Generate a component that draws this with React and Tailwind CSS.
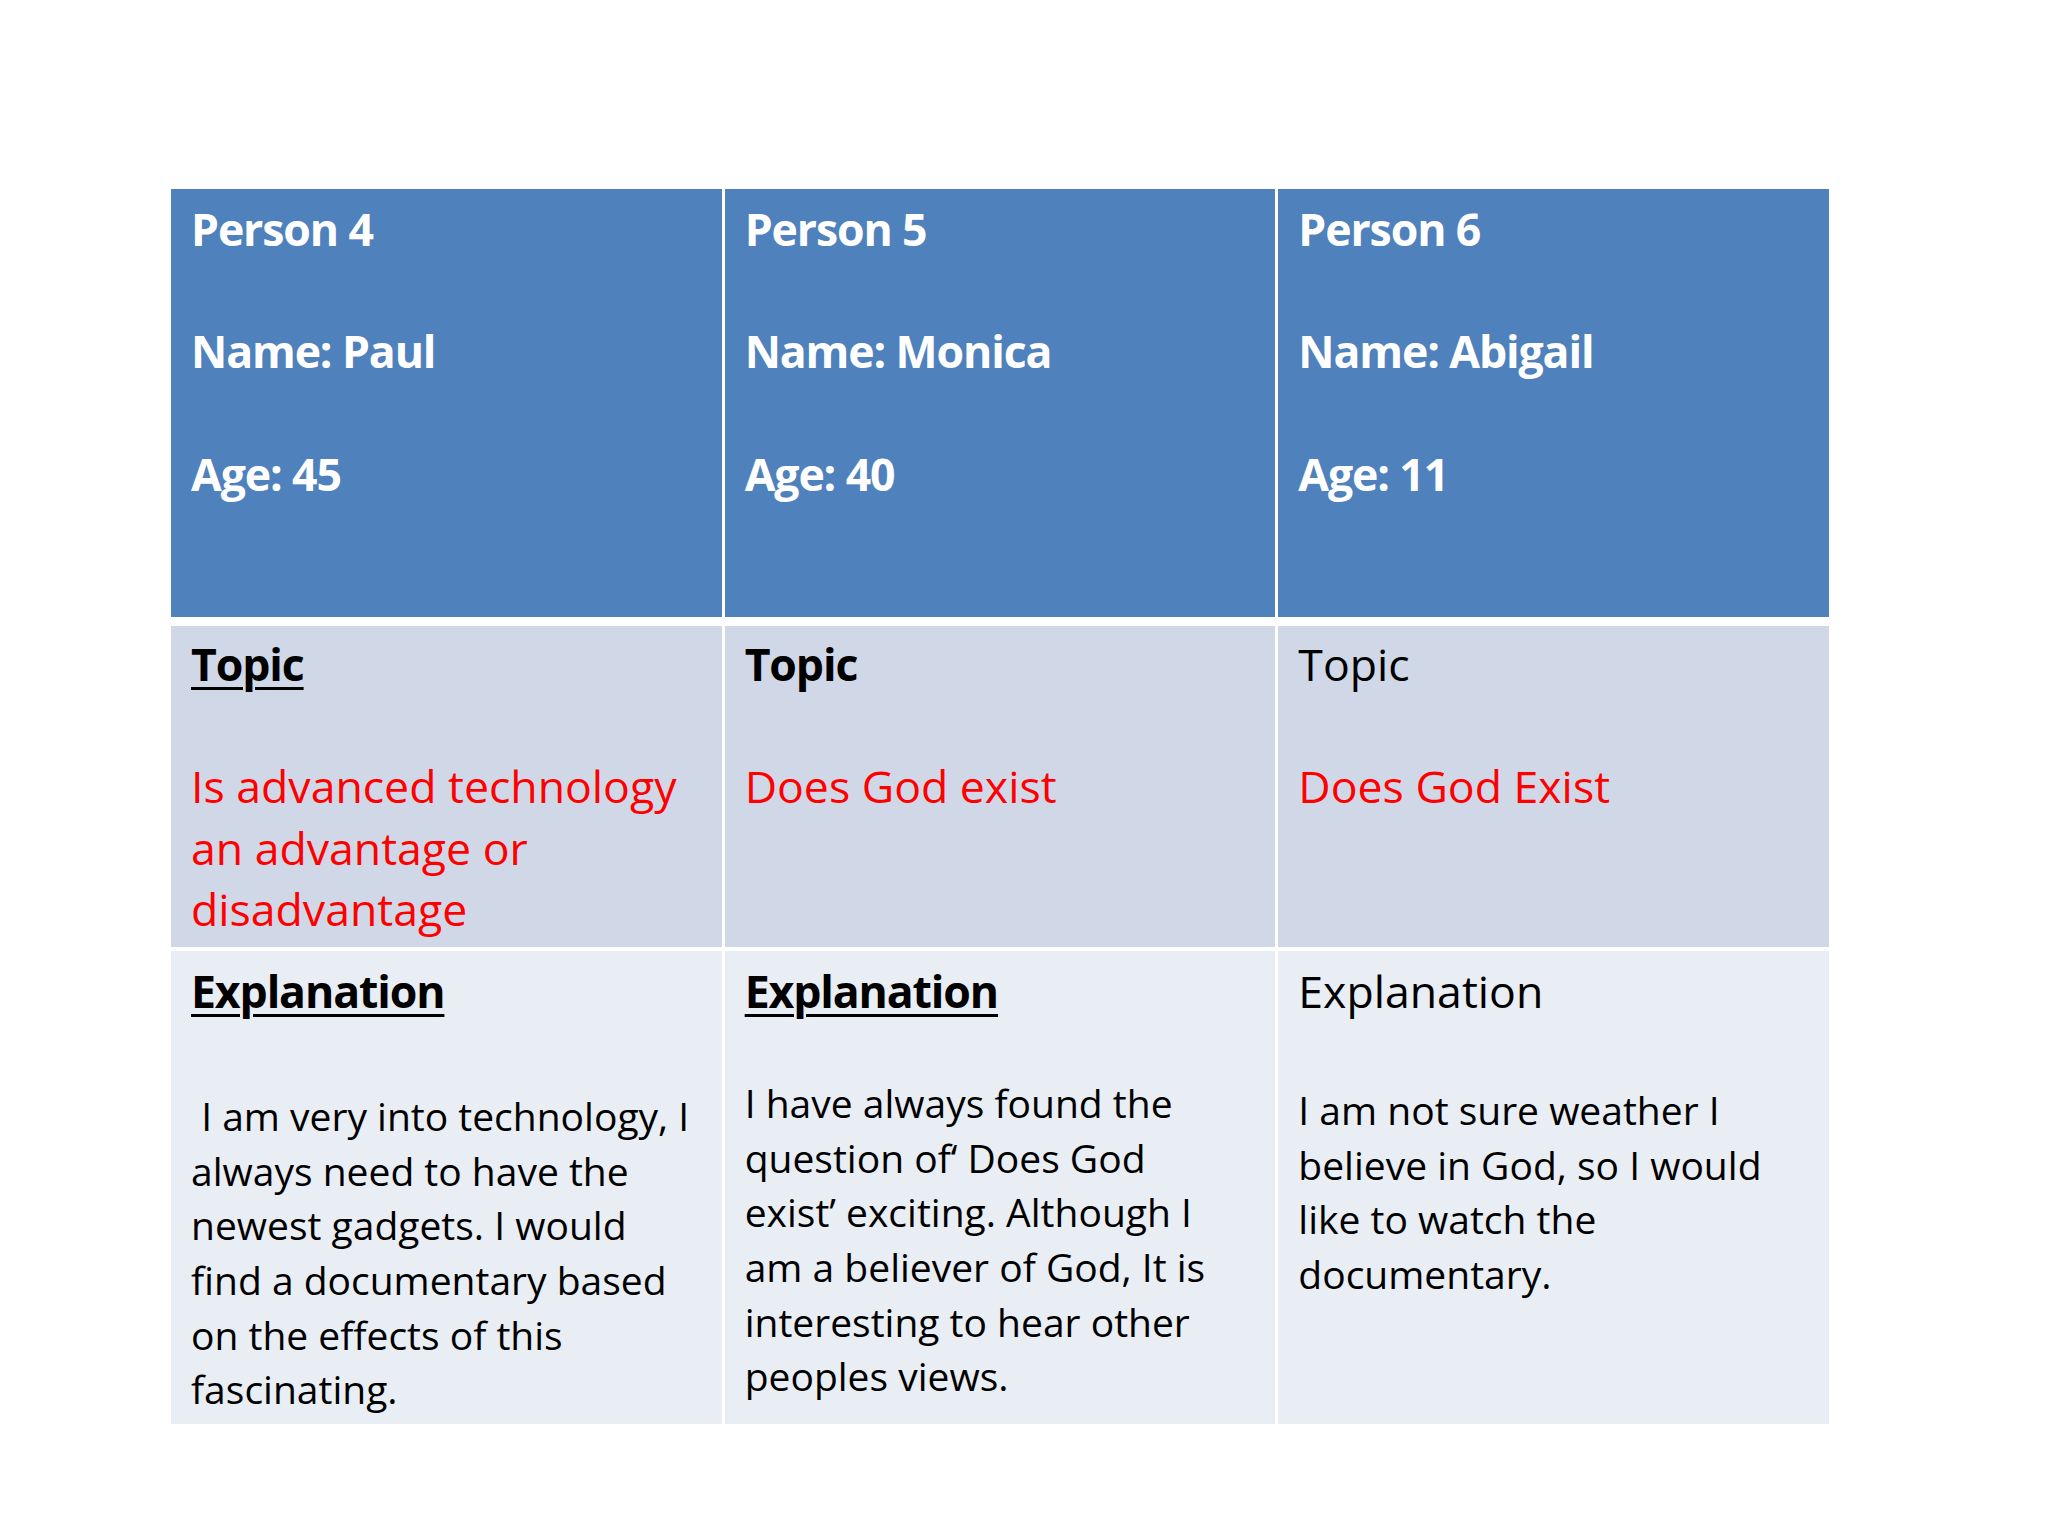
import React from "react";

const H = "text-[44.6px] leading-[61.2px]";
const B = "text-[39px] leading-[54.6px]";

function Lines({ lines, className = "" }) {
  return (
    <div className={className}>
      {lines.map((l, i) => (
        <div key={i} className="whitespace-pre">
          {l === "" ? "\u00a0" : l}
        </div>
      ))}
    </div>
  );
}

export default function App() {
  const people = [
    { p: "Person 4", n: "Name: Paul", a: "Age: 45" },
    { p: "Person 5", n: "Name: Monica", a: "Age: 40" },
    { p: "Person 6", n: "Name: Abigail", a: "Age: 11" },
  ];
  return (
    <div
      className="w-[2048px] h-[1536px] bg-white pt-[189px] pl-[171px]"
      style={{ fontFamily: '"Open Sans", "Noto Sans", sans-serif' }}
    >
      <div className="w-[1658px] flex flex-col">
        {/* header row */}
        <div className="grid grid-cols-3 gap-x-[3px] h-[428px]">
          {people.map((x, i) => (
            <div key={i} className={`bg-[#4f81bd] text-white font-bold tracking-[-0.025em] pl-[20px] pt-[9px] ${H}`}>
              <div>{x.p}</div>
              <div>&nbsp;</div>
              <div>{x.n}</div>
              <div>&nbsp;</div>
              <div>{x.a}</div>
            </div>
          ))}
        </div>
        {/* topic row */}
        <div className="grid grid-cols-3 gap-x-[3px] h-[321px] mt-[9px]">
          <div className={`bg-[#d0d8e8] pl-[20px] pt-[7px] ${H}`}>
            <div className="font-bold tracking-[-0.025em] underline decoration-[3px] underline-offset-[6px] text-black">Topic</div>
            <div>&nbsp;</div>
            <Lines className="text-[#ff0000]" lines={["Is advanced technology", "an advantage or", "disadvantage"]} />
          </div>
          <div className={`bg-[#d0d8e8] pl-[20px] pt-[7px] ${H}`}>
            <div className="font-bold tracking-[-0.025em] text-black">Topic</div>
            <div>&nbsp;</div>
            <div className="text-[#ff0000]">Does God exist</div>
          </div>
          <div className={`bg-[#d0d8e8] pl-[20px] pt-[7px] ${H}`}>
            <div className="text-black">Topic</div>
            <div>&nbsp;</div>
            <div className="text-[#ff0000]">Does God Exist</div>
          </div>
        </div>
        {/* explanation row */}
        <div className="grid grid-cols-3 gap-x-[3px] h-[473px] mt-[4px]">
          <div className="bg-[#e9edf4] pl-[20px] pt-[9px] text-black">
            <div className={`${H} font-bold tracking-[-0.025em] underline decoration-[3px] underline-offset-[6px]`}>Explanation</div>
            <Lines
              className={`${B} mt-[68px]`}
              lines={[
                "\u00a0I am very into technology, I",
                "always need to have the",
                "newest gadgets. I would",
                "find a documentary based",
                "on the effects of this",
                "fascinating.",
              ]}
            />
          </div>
          <div className="bg-[#e9edf4] pl-[20px] pt-[9px] text-black">
            <div className={`${H} font-bold tracking-[-0.025em] underline decoration-[3px] underline-offset-[6px]`}>Explanation</div>
            <Lines
              className={`${B} mt-[55px]`}
              lines={[
                "I have always found the",
                "question of\u2018 Does God",
                "exist\u2019 exciting. Although I",
                "am a believer of God, It is",
                "interesting to hear other",
                "peoples views.",
              ]}
            />
          </div>
          <div className="bg-[#e9edf4] pl-[20px] pt-[9px] text-black">
            <div className={`${H}`}>Explanation</div>
            <Lines
              className={`${B} mt-[62px]`}
              lines={[
                "I am not sure weather I",
                "believe in God, so I would",
                "like to watch the",
                "documentary.",
              ]}
            />
          </div>
        </div>
      </div>
    </div>
  );
}
